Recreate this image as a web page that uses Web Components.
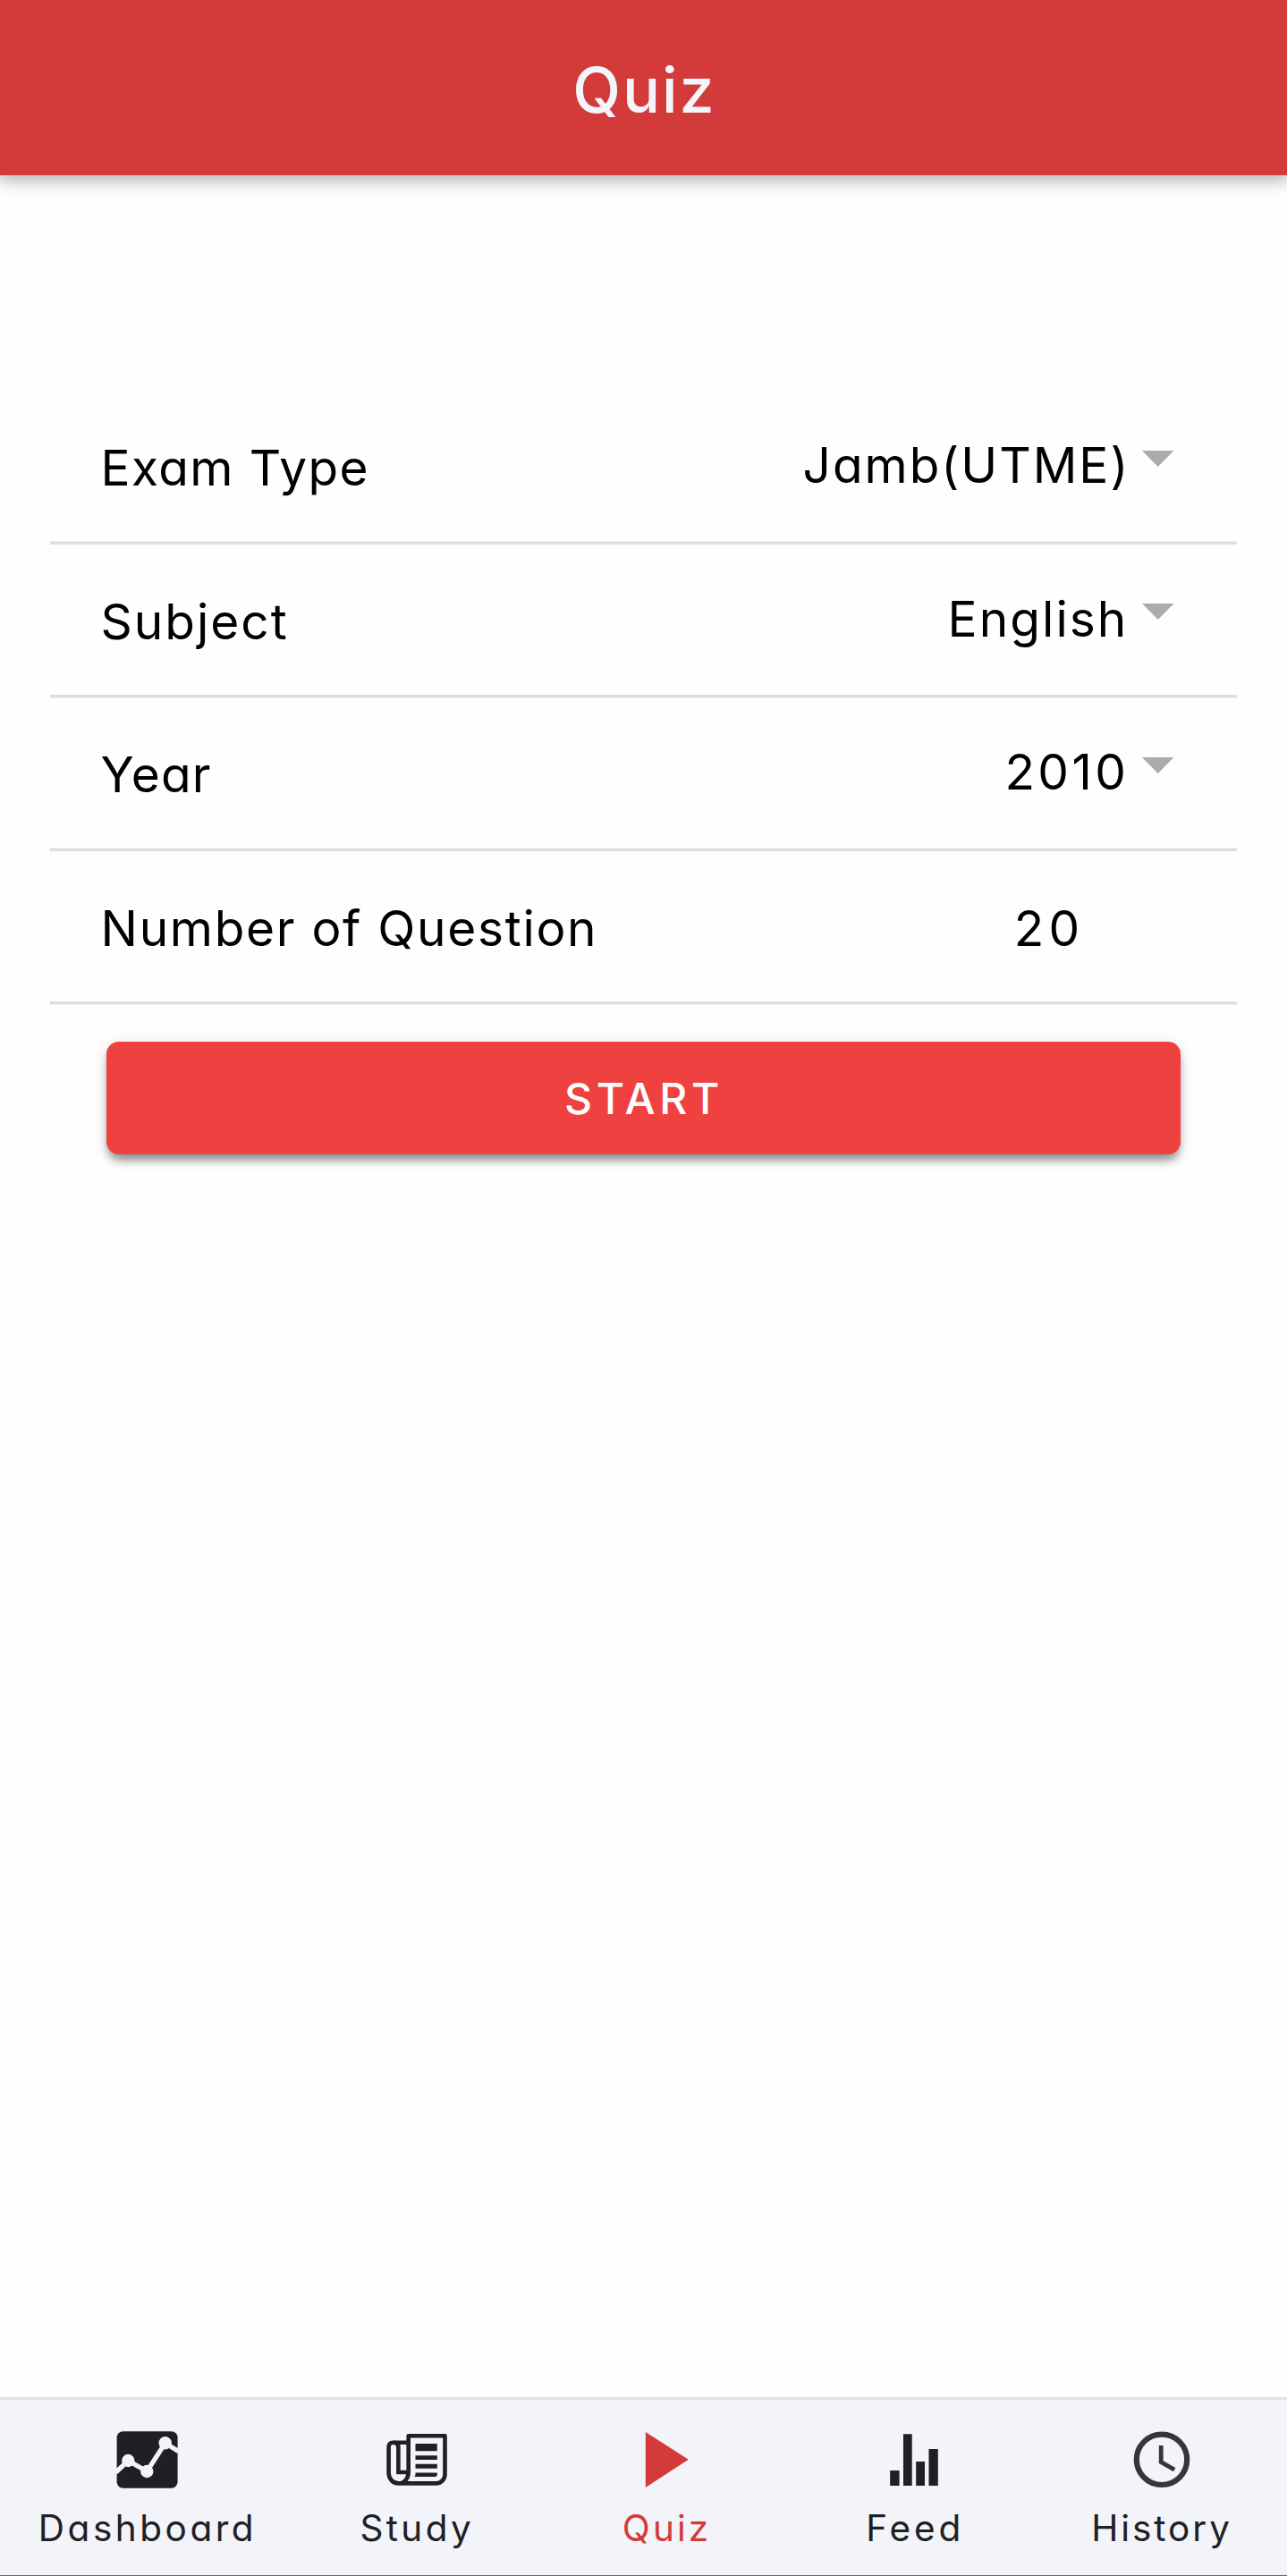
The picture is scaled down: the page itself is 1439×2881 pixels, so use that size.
<!DOCTYPE html>
<html lang="en">
<head>
<meta charset="utf-8">
<title>Quiz</title>
<style>
  body { margin: 0; background: #fefefe; font-family: Inter, Roboto, sans-serif; font-feature-settings: "cv11"; color: #000; }
</style>
</head>
<body>
<quiz-screen>
  <app-bar slot="bar">Quiz</app-bar>
  <setting-row label="Exam Type" select style="--ls:1.4px;--vls:1.96px;--gap:13.6px">Jamb(UTME)</setting-row>
  <setting-row label="Subject" select style="--ls:1.99px;--vls:2.05px;--gap:15.6px">English</setting-row>
  <setting-row label="Year" select style="--ls:1.1px;--vls:3.37px;--gap:14.8px">2010</setting-row>
  <setting-row label="Number of Question" style="--ls:1.69px;--vls:5.3px">20</setting-row>
  <action-button>START</action-button>
  <nav-bar slot="nav">
    <nav-tab label="Dashboard" icon="dashboard" style="--w:328;--ls:3.53px;--nudge:2px"></nav-tab>
    <nav-tab label="Study" icon="study" style="--w:275;--ls:3.33px;--nudge:1.5px"></nav-tab>
    <nav-tab label="Quiz" icon="quiz" active style="--w:283;--ls:3.1px;--nudge:2.2px"></nav-tab>
    <nav-tab label="Feed" icon="feed" style="--w:272;--ls:3.83px;--nudge:2.4px"></nav-tab>
    <nav-tab label="History" icon="history" style="--w:281;--ls:2.95px;--nudge:1px"></nav-tab>
  </nav-bar>
</quiz-screen>
<script>
class Base extends HTMLElement {
  connectedCallback() {
    if (!this.shadowRoot) this.attachShadow({ mode: "open" }).innerHTML = this.render();
  }
}

customElements.define("quiz-screen", class extends Base {
  render() {
    return `<style>
      :host { display: flex; flex-direction: column; height: 2881px; overflow: hidden; }
      main { flex: 1; display: flex; flex-direction: column; padding: 241px 56.5px 0 56px; }
    </style>
    <slot name="bar"></slot><main><slot></slot></main><slot name="nav"></slot>`;
  }
});

customElements.define("app-bar", class extends Base {
  render() {
    return `<style>
      :host { display: flex; justify-content: center; align-items: center; height: 196px; box-sizing: border-box;
        padding: 6px 0 0 1.8px; background: #d33a3a; color: #f4f5fa; font-size: 70px; font-weight: 500;
        line-height: 80px; letter-spacing: 1.85px; box-shadow: 0 5px 16px 2px rgba(0,0,0,.27); }
    </style><slot></slot>`;
  }
});

customElements.define("setting-row", class extends Base {
  render() {
    const select = this.hasAttribute("select");
    return `<style>
      :host { display: flex; align-items: center; height: 171.6px; box-sizing: border-box; border-bottom: 3px solid #dedede;
        padding: 0 70px 0 56.5px; font-size: 55px; line-height: 66px; white-space: nowrap; }
      :host(:nth-of-type(odd)) { box-shadow: inset 0 -1px #efefef; }
      :host(:nth-of-type(even)) { box-shadow: 0 1px #efefef; }
      .label { flex: 1; padding-top: 4px; letter-spacing: var(--ls); }
      .value { letter-spacing: var(--vls); padding: 4px 100px 0 0; }
      .select { padding: 0 var(--gap) 2px 0; }
      svg { display: block; width: 35.5px; height: 18px; margin-bottom: 17px; }
    </style>
    <span class="label">${this.getAttribute("label")}</span>
    <span class="value ${select ? "select" : ""}"><slot></slot></span>
    ${select ? `<svg viewBox="0 0 35.5 18"><path d="M0 0H35.5L17.75 18Z" fill="#ababab"/></svg>` : ""}`;
  }
});

customElements.define("action-button", class extends Base {
  render() {
    return `<style>
      :host { display: block; padding: 42px 63px 0; }
      button { display: flex; justify-content: center; align-items: center; width: 100%; height: 126px; box-sizing: border-box;
        border: 0; border-radius: 14px; padding: 1px 0 0 1.6px; background: #f04141; color: #fff;
        font: 500 48px/56px Inter, Roboto, sans-serif; letter-spacing: 4.64px;
        box-shadow: 0 11px 14px -7px rgba(0,0,0,.34), 0 7px 7px rgba(0,0,0,.17), 0 3px 18px rgba(0,0,0,.12); }
    </style><button type="button"><slot></slot></button>`;
  }
});

customElements.define("nav-bar", class extends Base {
  render() {
    return `<style>
      :host { display: flex; height: 200px; box-sizing: border-box; background: #f3f4f9; color: #1f2024;
        border-top: 3px solid #e0e2e8; border-bottom: 1px solid #d33a3a; }
    </style><slot></slot>`;
  }
});

const ICONS = {
  dashboard: `<rect x="2.6" y="4.3" width="68" height="63.4" rx="7" fill="currentColor"/>
    <path d="M1.5 50 15.3 37 36.3 49 56.7 17.3 71.5 26.5" fill="none" stroke="#f3f4f9" stroke-width="5.3"/>
    <g fill="#f3f4f9"><circle cx="15.3" cy="37" r="7.2"/><circle cx="36.3" cy="49" r="7.2"/><circle cx="56.7" cy="17.3" r="7.2"/></g>`,
  study: `<g fill="none" stroke="currentColor" stroke-width="4.6" stroke-linejoin="round">
      <path d="M15 62.4H57.5C63 62.4 67.5 58 67.5 52.4V9.3H26.7V49.5C26.7 57.5 22 62.4 15.4 62.4 9 62.4 4.6 57 4.6 50.5V22C4.6 18.6 6.5 16.7 9.5 16.7H26.7"/>
      <path d="M10.5 16.9C14 16.9 15.4 18.5 15.4 22V50H26" stroke-linejoin="miter"/></g>
    <path d="M34.5 18H58.8V26.3H34.5ZM34.5 31.2H58.8V36H34.5ZM34.5 40.8H58.8V45.7H34.5ZM34.5 50.6H58.8V52.8Q58.8 55 56.5 55H33Q34.5 54.4 34.5 52.8Z" fill="currentColor"/>`,
  quiz: `<path d="M12.8 5V67L60.8 35.8Z" fill="currentColor"/>`,
  feed: `<path d="M9.2 48H19.6V65H9.2ZM24 7.2H33.7V65H24ZM38.2 38H48V65H38.2ZM52.5 24H62.8V65H52.5Z" fill="currentColor"/>`,
  history: `<g fill="none" stroke="#35363a"><circle cx="36" cy="35.8" r="28.2" stroke-width="6.2"/>
    <path d="M35.2 20V38.6L50.2 47.2" stroke-width="4.8"/></g>`
};

customElements.define("nav-tab", class extends Base {
  render() {
    return `<style>
      :host { display: flex; flex-direction: column; align-items: center; flex: var(--w) 0 0; box-sizing: border-box; padding-top: 31px; }
      :host([active]) { color: #d33a3a; }
      svg { display: block; width: 72px; height: 72px; }
      span { margin-top: 17px; padding-left: var(--nudge); font-size: 40.5px; line-height: 48px; letter-spacing: var(--ls); }
    </style>
    <svg viewBox="0 0 72 72">${ICONS[this.getAttribute("icon")]}</svg>
    <span>${this.getAttribute("label")}</span>`;
  }
});
</script>
</body>
</html>
